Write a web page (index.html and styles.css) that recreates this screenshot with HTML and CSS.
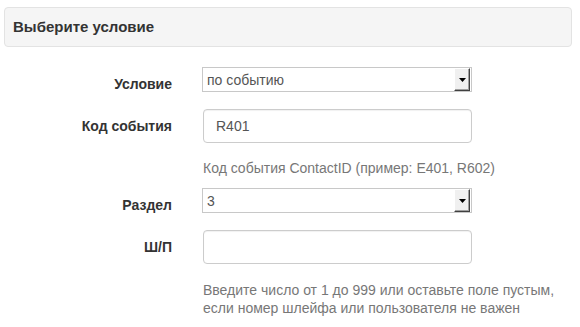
FILE: index.html
```html
<!DOCTYPE html>
<html lang="ru">
<head>
<meta charset="utf-8">
<title>Выберите условие</title>
<link rel="stylesheet" href="styles.css">
</head>
<body>
<div class="panel">
  <div class="panel-heading">Выберите условие</div>
</div>
<form class="form">
  <div class="row row-select">
    <label class="label">Условие</label>
    <div class="control">
      <div class="select-wrap">
        <select class="select"><option>по событию</option></select>
        <span class="select-btn"><svg width="7" height="4" viewBox="0 0 7 4"><path d="M0 0H7L3.5 4Z" fill="#000"/></svg></span>
      </div>
    </div>
  </div>
  <div class="row row-input">
    <label class="label">Код события</label>
    <div class="control">
      <input class="input" type="text" value="R401">
      <p class="help help-1">Код события ContactID (пример: E401, R602)</p>
    </div>
  </div>
  <div class="row row-select row-3">
    <label class="label">Раздел</label>
    <div class="control">
      <div class="select-wrap">
        <select class="select"><option>3</option></select>
        <span class="select-btn"><svg width="7" height="4" viewBox="0 0 7 4"><path d="M0 0H7L3.5 4Z" fill="#000"/></svg></span>
      </div>
    </div>
  </div>
  <div class="row row-input">
    <label class="label">Ш/П</label>
    <div class="control">
      <input class="input" type="text" value="">
      <p class="help help-2">Введите число от 1 до 999 или оставьте поле пустым,<br>если номер шлейфа или пользователя не важен</p>
    </div>
  </div>
</form>
</body>
</html>
```
FILE: styles.css
```css
html, body {
  margin: 0;
  padding: 0;
  background: #fff;
}
body {
  font-family: "Liberation Sans", Arial, sans-serif;
  font-size: 14px;
  line-height: 20px;
  color: #333;
}
.panel {
  margin: 7px 8px 0 4px;
}
.panel-heading {
  background: #f5f5f5;
  border: 1px solid #e3e3e3;
  border-radius: 4px;
  padding: 9px 8px;
  font-weight: bold;
  font-size: 15px;
  line-height: 20px;
  color: #333;
}
.form {
  margin: 20px 0 0 0;
}
.row {
  display: grid;
  grid-template-columns: 172px 270px;
  column-gap: 30px;
  align-items: start;
  margin-bottom: 17px;
}
.row-3 {
  margin-top: -7px;
}
.label {
  text-align: right;
  font-weight: bold;
  padding-top: 7px;
  line-height: 20px;
  color: #333;
}
.row-select .label {
  box-sizing: border-box;
  height: 25px;
}
.control {
  min-width: 0;
}
.select-wrap {
  position: relative;
  height: 25px;
}
.select {
  appearance: none;
  -webkit-appearance: none;
  display: block;
  box-sizing: border-box;
  width: 270px;
  height: 25px;
  margin: 0;
  padding: 0 20px 0 4px;
  border: 1px solid #c8c8c8;
  border-radius: 0;
  background: #fff;
  font-family: "Liberation Sans", Arial, sans-serif;
  font-size: 14px;
  color: #555;
  line-height: 20px;
}
.select-btn {
  position: absolute;
  top: 1px;
  right: 2px;
  width: 16px;
  height: 23px;
  box-sizing: border-box;
  background: #f0f0f0;
  border-top: 1px solid #fff;
  border-left: 1px solid #fff;
  border-right: 1px solid #404040;
  border-bottom: 1px solid #404040;
  box-shadow: inset -1px -1px 0 #a0a0a0;
  display: flex;
  align-items: center;
  justify-content: center;
}
.select-btn svg {
  display: block;
  margin-top: 1px;
}
.input {
  display: block;
  box-sizing: border-box;
  width: 269px;
  height: 34px;
  margin: 0 0 0 1px;
  padding: 6px 12px;
  border: 1px solid #ccc;
  border-radius: 4px;
  background: #fff;
  font-family: "Liberation Sans", Arial, sans-serif;
  font-size: 14px;
  color: #555;
  box-shadow: inset 0 1px 1px rgba(0,0,0,0.06);
}
.help {
  margin: 0 0 0 1px;
  color: #777;
  white-space: nowrap;
}
.help-1 {
  margin-top: 15px;
}
.help-2 {
  margin-top: 17px;
  line-height: 18px;
}
```
